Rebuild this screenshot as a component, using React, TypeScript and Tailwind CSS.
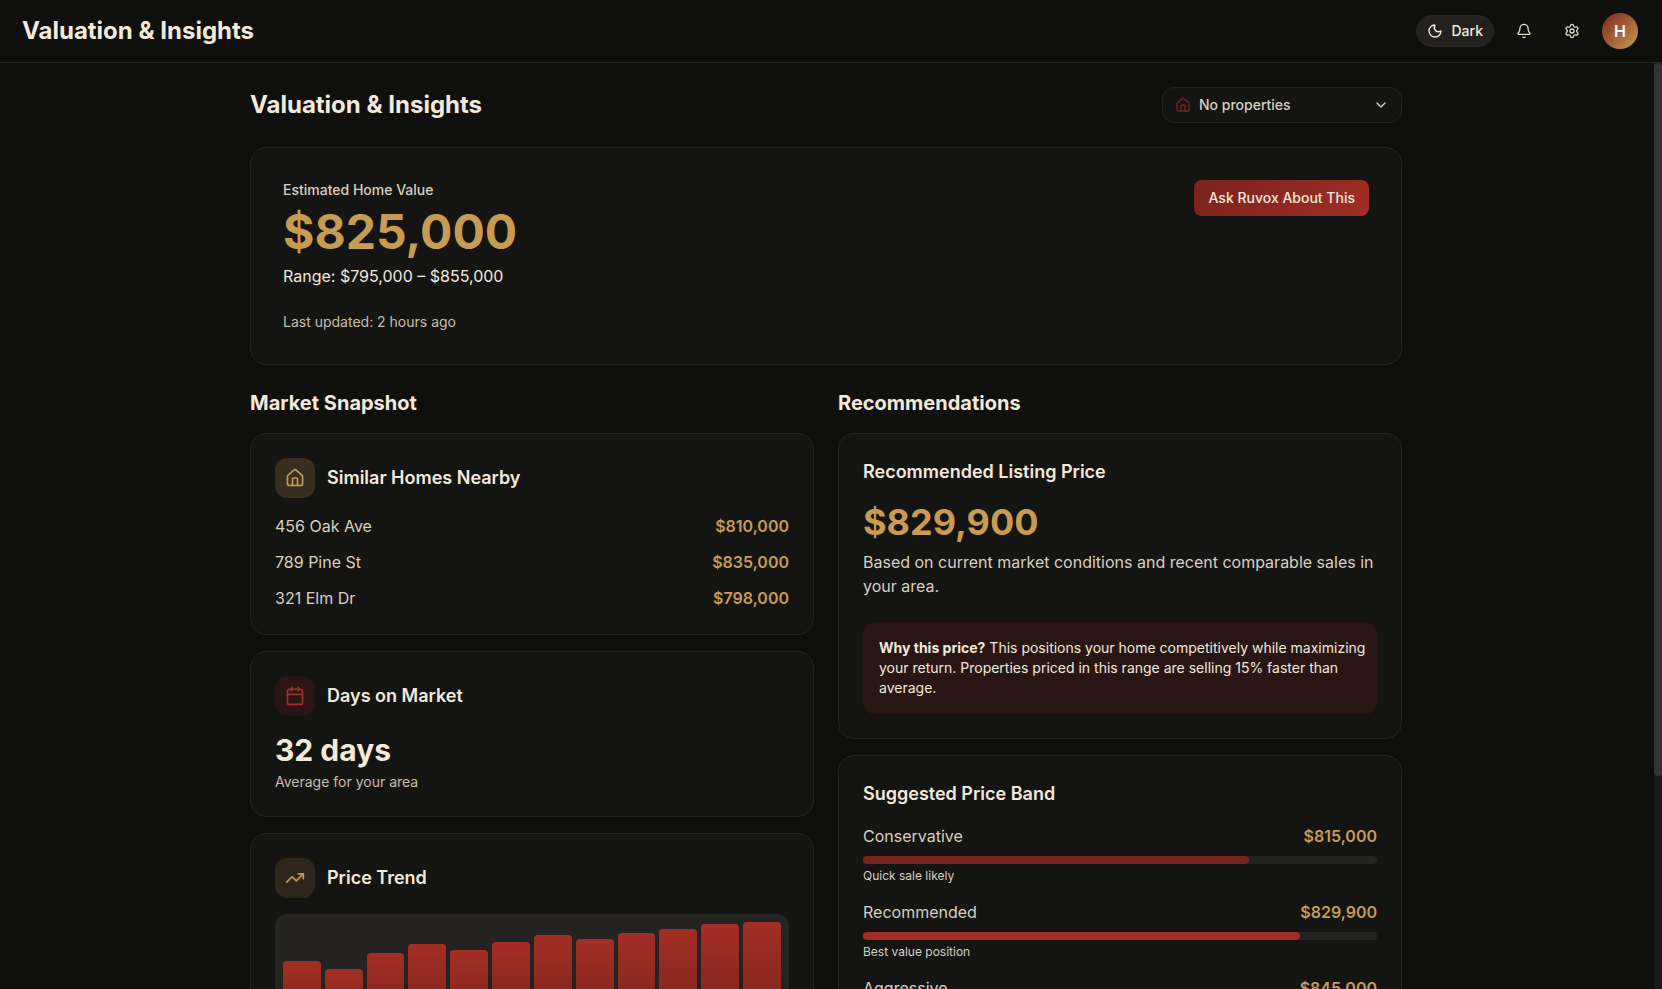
import { useState } from 'react'
import { Bell, Calendar, ChevronDown, House, Moon, Settings, TrendingUp } from 'lucide-react'
import type { ReactNode } from 'react'

interface Comparable { address: string; price: string }
interface Band { label: string; price: string; note: string; percent: number; color: string }

const comparables: Comparable[] = [
  { address: '456 Oak Ave', price: '$810,000' },
  { address: '789 Pine St', price: '$835,000' },
  { address: '321 Elm Dr', price: '$798,000' },
]

const bands: Band[] = [
  { label: 'Conservative', price: '$815,000', note: 'Quick sale likely', percent: 75, color: 'bg-[#7a231c]' },
  { label: 'Recommended', price: '$829,900', note: 'Best value position', percent: 85, color: 'bg-[#a32e25]' },
  { label: 'Aggressive', price: '$845,000', note: '', percent: 95, color: 'bg-[#c89b52]' },
]

const trend = [65, 58, 72, 80, 75, 82, 88, 85, 90, 94, 98, 100]

function Card({ children, className = 'p-6' }: { children: ReactNode; className?: string }) {
  return (
    <section className={`rounded-2xl border border-[#232322] bg-[#141412] ${className}`}>
      {children}
    </section>
  )
}

function CardTitle({ icon, tint, children }: { icon: ReactNode; tint: string; children: ReactNode }) {
  return (
    <div className="mb-4 flex items-center gap-3">
      <div className={`flex size-10 items-center justify-center rounded-xl ${tint}`}>{icon}</div>
      <h3 className="text-lg font-semibold">{children}</h3>
    </div>
  )
}

function Header() {
  const [dark, setDark] = useState(true)

  return (
    <header className="flex shrink-0 items-center justify-between border-b border-[#232322] py-[13px] pr-6 pl-[22px]">
      <h1 className="text-2xl font-bold">Valuation &amp; Insights</h1>
      <div className="flex items-center gap-3">
        <button
          type="button"
          onClick={() => setDark(!dark)}
          className="flex h-8 items-center gap-2 rounded-full border border-[#272625] bg-[#222120] px-2.5 text-sm font-medium"
        >
          <Moon className="size-4 text-[#f3eadb]" />
          {dark ? 'Dark' : 'Light'}
        </button>
        <button type="button" aria-label="Notifications" className="flex size-9 items-center justify-center text-[#e3dacb]">
          <Bell className="size-4" />
        </button>
        <button type="button" aria-label="Settings" className="flex size-9 items-center justify-center text-[#e3dacb]">
          <Settings className="size-4" />
        </button>
        <button
          type="button"
          aria-label="Account"
          className="size-9 rounded-full bg-linear-135 from-[#7a231c] to-[#c89b52] font-semibold text-white"
        >
          H
        </button>
      </div>
    </header>
  )
}

export default function App() {
  return (
    <div className="flex h-screen flex-col bg-[#0f0f0d] font-['Inter','Liberation_Sans',sans-serif] text-[#f3eadb]">
      <Header />
      <div className="flex min-h-0 flex-1">
        <main className="min-w-0 flex-1 overflow-y-auto [scrollbar-width:none]">
          <div className="mx-auto max-w-[1200px] px-6 pt-6 pb-36">
            <div className="mb-6 flex items-center justify-between">
              <h2 className="text-2xl font-bold">Valuation &amp; Insights</h2>
              <button
                type="button"
                className="flex h-9 w-60 items-center gap-2 rounded-xl border border-[#232322] bg-[#141412] px-3 text-sm font-medium text-[#d9d0c0]"
              >
                <House className="size-4 text-[#7a231c]" />
                No properties
                <ChevronDown className="ml-auto size-4" />
              </button>
            </div>

            <Card className="mb-6 flex items-start justify-between p-8">
              <div>
                <p className="mb-2 text-sm font-medium text-[#d9d0c0]">Estimated Home Value</p>
                <p className="mb-2 text-5xl font-bold text-[#c89b52]">$825,000</p>
                <p>Range: $795,000 – $855,000</p>
                <p className="mt-6 text-sm text-[#c6beaf]">Last updated: 2 hours ago</p>
              </div>
              <button
                type="button"
                className="h-9 rounded-lg bg-linear-135 from-[#7a231c] to-[#a32e25] px-3.5 text-sm font-medium"
              >
                Ask Ruvox About This
              </button>
            </Card>

            <div className="grid grid-cols-2 gap-6">
              <div className="flex flex-col gap-4">
                <h2 className="text-xl font-bold">Market Snapshot</h2>

                <Card>
                  <CardTitle tint="bg-[#382d1f]" icon={<House className="size-5 text-[#c89b52]" />}>
                    Similar Homes Nearby
                  </CardTitle>
                  <ul className="space-y-3">
                    {comparables.map(c => (
                      <li key={c.address} className="flex justify-between">
                        <span className="text-[#d9d0c0]">{c.address}</span>
                        <span className="font-semibold text-[#c89b52]">{c.price}</span>
                      </li>
                    ))}
                  </ul>
                </Card>

                <Card>
                  <CardTitle tint="bg-[#291614]" icon={<Calendar className="size-5 text-[#a32e25]" />}>
                    Days on Market
                  </CardTitle>
                  <p className="mb-1 text-3xl font-bold">32 days</p>
                  <p className="text-sm text-[#c6beaf]">Average for your area</p>
                </Card>

                <Card>
                  <CardTitle tint="bg-[#2e261a]" icon={<TrendingUp className="size-5 text-[#c89b52]" />}>
                    Price Trend
                  </CardTitle>
                  <div className="flex h-32 items-end gap-1 rounded-xl bg-[#242322] p-2">
                    {trend.map((value, i) => (
                      <div
                        key={i}
                        className="flex-1 rounded-t bg-linear-to-b from-[#a32e25] to-[#7a231c]"
                        style={{ height: `${value}%` }}
                      />
                    ))}
                  </div>
                </Card>
              </div>

              <div className="flex flex-col gap-4">
                <h2 className="text-xl font-bold">Recommendations</h2>

                <Card>
                  <h3 className="mb-4 text-lg font-semibold">Recommended Listing Price</h3>
                  <p className="mb-2 text-4xl font-bold text-[#c89b52]">$829,900</p>
                  <p className="mb-6 text-[#d9d0c0]">
                    Based on current market conditions and recent comparable sales in your area.
                  </p>
                  <p className="rounded-xl bg-[#291614] py-4 pr-2 pl-4 text-sm">
                    <strong>Why this price?</strong> This positions your home competitively while maximizing
                    your return. Properties priced in this range are selling 15% faster than
                    <br />
                    average.
                  </p>
                </Card>

                <Card>
                  <h3 className="mb-4 text-lg font-semibold">Suggested Price Band</h3>
                  <div className="space-y-4">
                    {bands.map(b => (
                      <div key={b.label}>
                        <div className="mb-2 flex justify-between">
                          <span className="text-[#d9d0c0]">{b.label}</span>
                          <span className="font-semibold text-[#c89b52]">{b.price}</span>
                        </div>
                        <div className="h-2 rounded-full bg-[#242322]">
                          <div className={`h-2 rounded-full ${b.color}`} style={{ width: `${b.percent}%` }} />
                        </div>
                        <p className="mt-1 text-xs text-[#d9d0c0]">{b.note}</p>
                      </div>
                    ))}
                  </div>
                </Card>
              </div>
            </div>
          </div>
        </main>

        {/* Scroll track */}
        <div aria-hidden="true" className="w-2.5 shrink-0 border-l-2 border-[#0f0f0d] bg-[#1a1a1a]">
          <div className="h-[77%] rounded bg-[#333333]" />
        </div>
      </div>
    </div>
  )
}
